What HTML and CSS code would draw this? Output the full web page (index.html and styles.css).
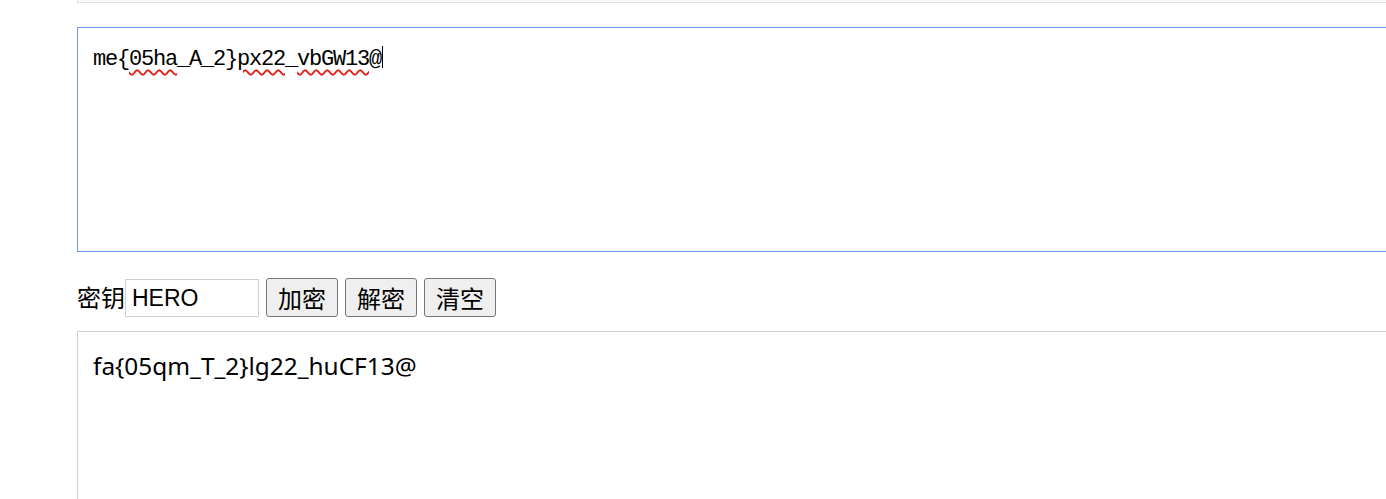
FILE: index.html
```html
<!DOCTYPE html>
<html lang="zh-CN">
<head>
<meta charset="utf-8">
<title>加密解密</title>
<link rel="stylesheet" href="styles.css">
</head>
<body>
<div class="page">
  <div class="prev-box"></div>
  <div class="area area-input">me{<span class="typo">05ha</span>_A_2}<span class="typo">px22</span>_<span class="typo">vbGW13</span>@<span class="caret"></span></div>
  <div class="controls">
    <span class="label">密钥</span>
    <div class="key-input">HERO</div>
    <button class="btn">加密</button>
    <button class="btn">解密</button>
    <button class="btn">清空</button>
  </div>
  <div class="area area-output">fa{05qm_T_2}lg22_huCF13@</div>
</div>
</body>
</html>
```
FILE: styles.css
```css
html, body {
  margin: 0;
  padding: 0;
  background: #fff;
  overflow: hidden;
}
.page {
  box-sizing: border-box;
  padding-left: 77px;
  width: 100%;
  height: 499px;
  display: flex;
  flex-direction: column;
}
.prev-box {
  height: 2px;
  border: 1px solid #e2e2e2;
  border-top: none;
  border-right: none;
  background: #f9f9f9;
}
.area {
  box-sizing: border-box;
  color: #000;
  white-space: pre;
  border-right: none !important;
}
.area-input {
  margin-top: 24px;
  height: 225px;
  border: 1px solid #6b9be8;
  padding: 14px 15px 12px;
  font-family: "Liberation Mono", monospace;
  font-size: 22px;
  letter-spacing: -1.2px;
  line-height: 36px;
}
.typo {
  text-decoration: underline wavy #e0221b;
  text-decoration-thickness: 1.5px;
  text-underline-offset: 4px;
}
.caret {
  display: inline-block;
  width: 1px;
  height: 22px;
  background: #000;
  vertical-align: -3px;
  margin-left: 1px;
}
.controls {
  display: flex;
  align-items: center;
  margin-top: 25px;
  height: 40px;
  font-family: "Noto Sans CJK SC", sans-serif;
  font-size: 24px;
}
.label {
  line-height: 40px;
}
.key-input {
  box-sizing: border-box;
  width: 134px;
  height: 38px;
  border: 1px solid #cfcfcf;
  padding: 0 6px;
  font-family: "Liberation Sans", sans-serif;
  font-size: 23px;
  line-height: 36px;
  margin-top: 1px;
}
.btn {
  box-sizing: border-box;
  margin-left: 7px;
  width: 72px;
  height: 39px;
  padding: 0;
  border: 1px solid #767676;
  border-radius: 3px;
  background: #efefef;
  color: #000;
  font-family: "Noto Sans CJK SC", sans-serif;
  font-size: 24px;
  line-height: 37px;
}
.area-output {
  margin-top: 14px;
  flex: 1;
  min-height: 0;
  border: 1px solid #cfcfcf;
  border-bottom: none;
  padding: 12px 15px;
  font-family: "Noto Sans", sans-serif;
  font-size: 24.4px;
  line-height: 44px;
}
```
